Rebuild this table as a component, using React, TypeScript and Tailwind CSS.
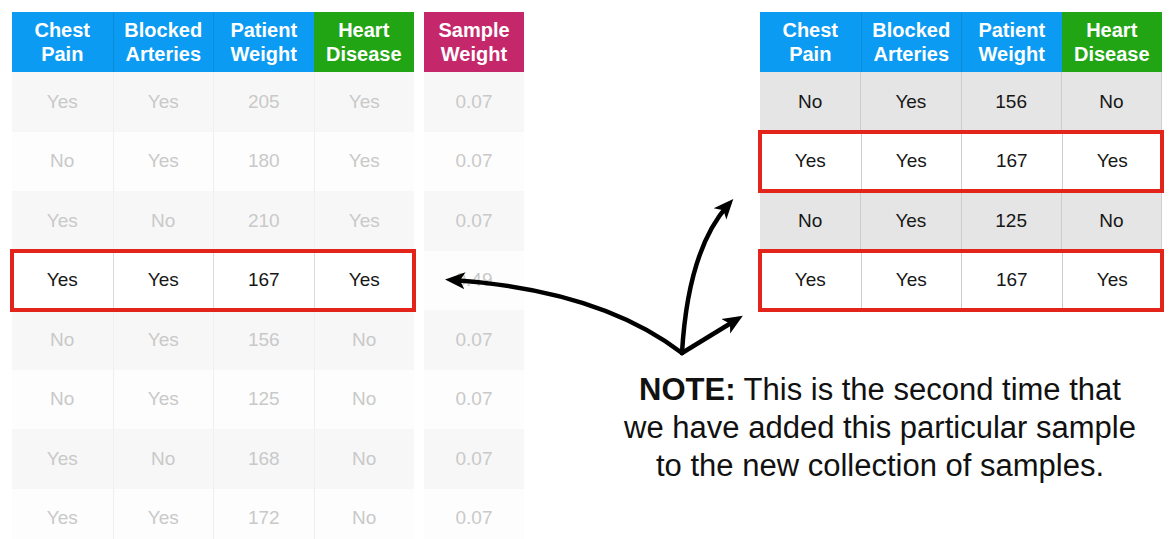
import clsx from "clsx";

const headers = [
  { top: "Chest", bottom: "Pain", bg: "bg-[#0b9bf3]" },
  { top: "Blocked", bottom: "Arteries", bg: "bg-[#0b9bf3]" },
  { top: "Patient", bottom: "Weight", bg: "bg-[#0b9bf3]" },
  { top: "Heart", bottom: "Disease", bg: "bg-[#22a514]" },
];

const leftRows = [
  ["Yes", "Yes", "205", "Yes", "0.07"],
  ["No", "Yes", "180", "Yes", "0.07"],
  ["Yes", "No", "210", "Yes", "0.07"],
  ["Yes", "Yes", "167", "Yes", "0.49"],
  ["No", "Yes", "156", "No", "0.07"],
  ["No", "Yes", "125", "No", "0.07"],
  ["Yes", "No", "168", "No", "0.07"],
  ["Yes", "Yes", "172", "No", "0.07"],
];

const rightRows = [
  { cells: ["No", "Yes", "156", "No"], picked: false },
  { cells: ["Yes", "Yes", "167", "Yes"], picked: true },
  { cells: ["No", "Yes", "125", "No"], picked: false },
  { cells: ["Yes", "Yes", "167", "Yes"], picked: true },
];

function HeaderRow() {
  return (
    <div className="grid grid-cols-4 h-[60px]">
      {headers.map((h, i) => (
        <div
          key={h.top}
          className={clsx(
            "flex flex-col items-center justify-center text-white font-bold text-[20px] leading-[24px]",
            h.bg,
            i > 0 && i < 3 && "border-l border-[#0a8cdc]"
          )}
        >
          <span>{h.top}</span>
          <span>{h.bottom}</span>
        </div>
      ))}
    </div>
  );
}

function LeftTable() {
  return (
    <div className="w-[402px]">
      <HeaderRow />
      {leftRows.map((r, i) => {
        const hot = i === 3;
        return (
          <div
            key={i}
            className={clsx(
              "grid grid-cols-4 h-[59.5px]",
              hot
                ? "relative z-10 bg-white text-[#161616] outline-[4px] outline-solid outline-[#e3241b] -outline-offset-2"
                : i % 2 === 0
                  ? "bg-[#f7f7f7] text-[#c9c9c9]"
                  : "bg-[#fdfdfd] text-[#c9c9c9]"
            )}
          >
            {r.slice(0, 4).map((c, j) => (
              <div
                key={j}
                className={clsx(
                  "flex items-center justify-center text-[19px]",
                  j > 0 && (hot ? "border-l border-[#dadada]" : "border-l border-[#efefef]")
                )}
              >
                {c}
              </div>
            ))}
          </div>
        );
      })}
    </div>
  );
}

function WeightColumn() {
  return (
    <div className="w-[100px]">
      <div className="h-[60px] bg-[#c4286b] flex flex-col items-center justify-center text-white font-bold text-[20px] leading-[24px]">
        <span>Sample</span>
        <span>Weight</span>
      </div>
      {leftRows.map((r, i) => (
        <div
          key={i}
          className={clsx(
            "h-[59.5px] flex items-center justify-center text-[19px] text-[#c9c9c9]",
            i % 2 === 0 && i !== 3 ? "bg-[#f7f7f7]" : "bg-[#fdfdfd]"
          )}
        >
          {r[4]}
        </div>
      ))}
    </div>
  );
}

function RightTable() {
  return (
    <div className="w-[402px] self-end">
      <HeaderRow />
      {rightRows.map((r, i) => (
        <div
          key={i}
          className={clsx(
            "grid grid-cols-4 h-[59.5px] text-[#161616]",
            r.picked
              ? "relative z-10 bg-white outline-[4px] outline-solid outline-[#e3241b] -outline-offset-2"
              : "bg-[#e5e5e5] border-r border-[#cfcfcf]"
          )}
        >
          {r.cells.map((c, j) => (
            <div
              key={j}
              className={clsx(
                "flex items-center justify-center text-[19px]",
                j > 0 && "border-l border-[#cccccc]"
              )}
            >
              {c}
            </div>
          ))}
        </div>
      ))}
    </div>
  );
}

function Arrows() {
  return (
    <svg
      className="absolute left-0 top-0 z-20 pointer-events-none"
      width="1172"
      height="539"
      viewBox="0 0 1172 539"
    >
      <defs>
        <marker
          id="head"
          viewBox="0 0 20 20"
          refX="12"
          refY="10"
          markerWidth="20"
          markerHeight="20"
          markerUnits="userSpaceOnUse"
          orient="auto"
        >
          <path d="M0,1.5 L20,10 L0,18.5 L5,10 Z" fill="#000" />
        </marker>
      </defs>
      <g fill="none" stroke="#000" strokeWidth="4.5" strokeLinecap="round">
        <path d="M682,353 Q600,290 453,280" markerEnd="url(#head)" />
        <path d="M682,353 Q688,250 728,205" markerEnd="url(#head)" />
        <path d="M682,353 L736,320" markerEnd="url(#head)" />
      </g>
    </svg>
  );
}

export default function App() {
  return (
    <div className="relative w-[1172px] h-[539px] overflow-hidden bg-white font-['Liberation_Sans',Arial,sans-serif]">
      <div className="flex items-start pt-[12px] pl-[12px]">
        <div className="flex items-start gap-[10px]">
          <LeftTable />
          <WeightColumn />
        </div>
        <div className="ml-[74px] w-[564px] flex flex-col">
          <RightTable />
          <p className="mt-[61px] text-center text-[31px] leading-[38px] text-[#111]">
            <span className="font-bold">NOTE:</span> This is the second time that
            <br />
            we have added this particular sample
            <br />
            to the new collection of samples.
          </p>
        </div>
      </div>
      <Arrows />
    </div>
  );
}
